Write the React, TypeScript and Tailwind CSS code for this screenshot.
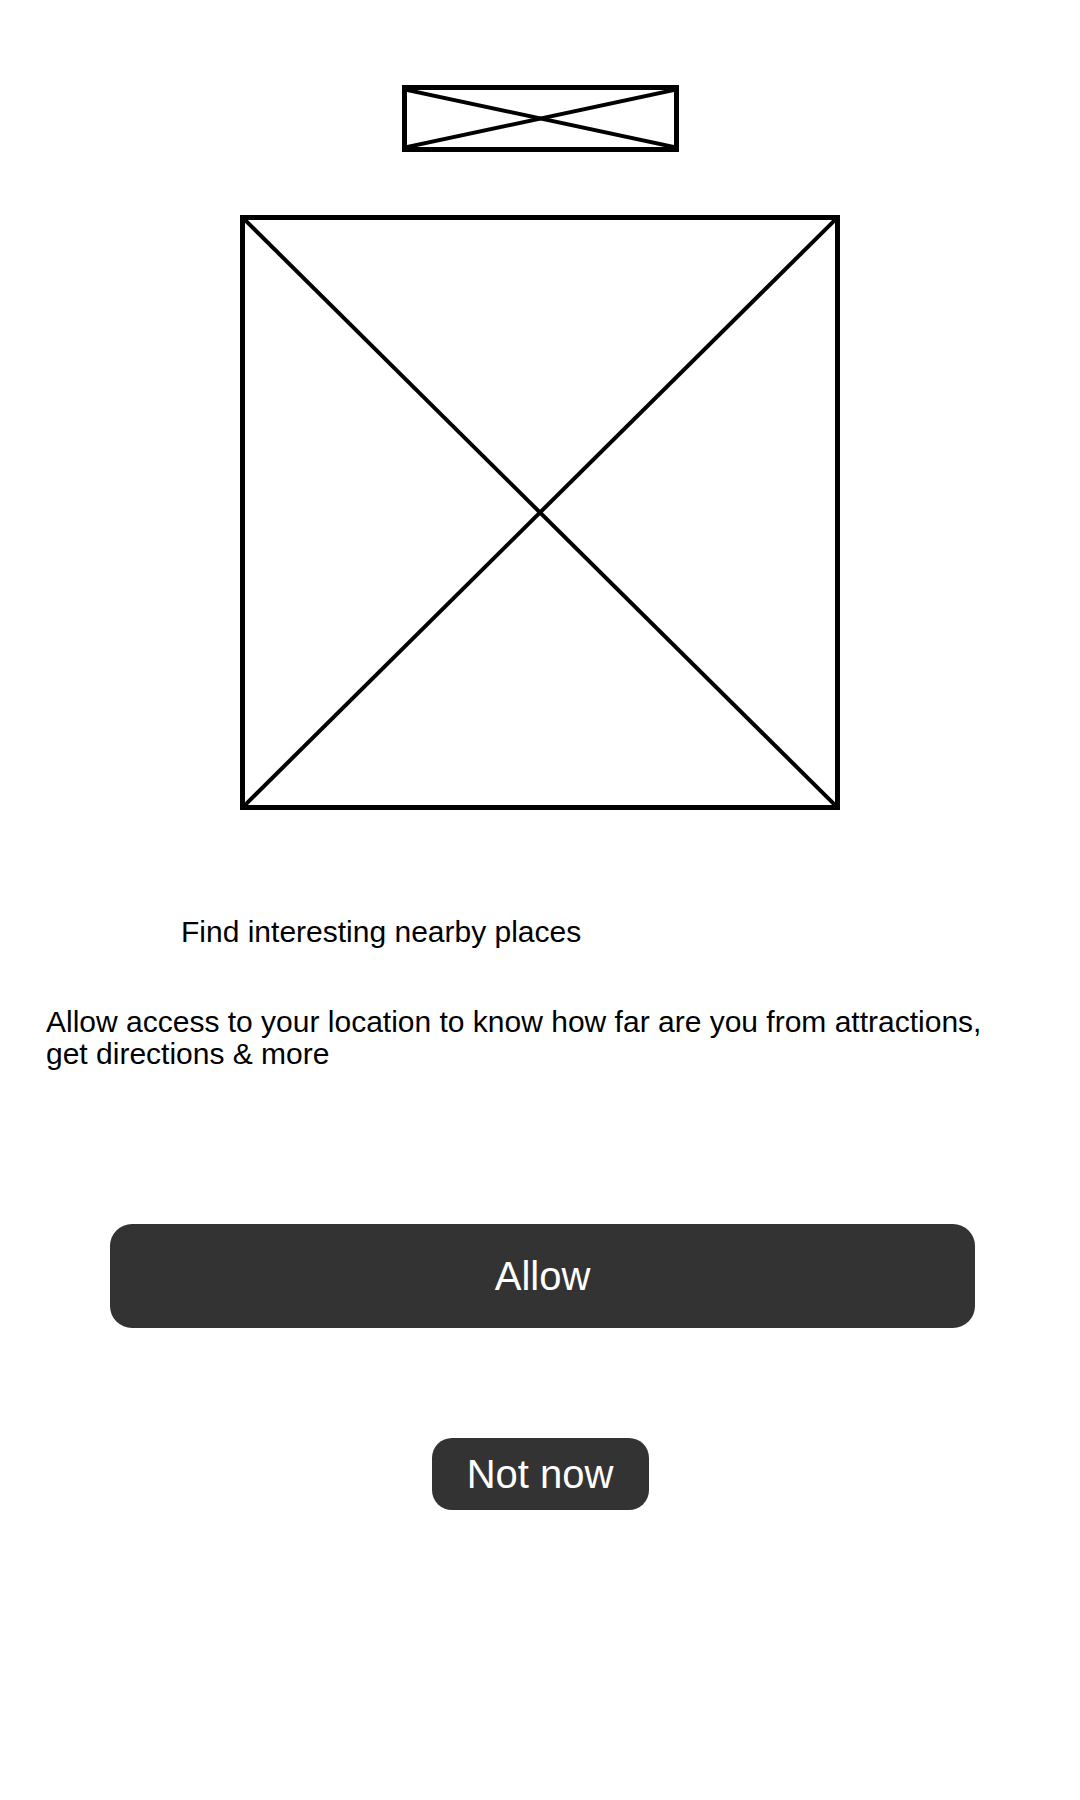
import React from "react";

function Placeholder({ className }: { className: string }) {
  return (
    <div className={`relative border-[5px] border-black bg-white ${className}`}>
      <svg className="absolute inset-0 h-full w-full" viewBox="0 0 100 100" preserveAspectRatio="none">
        <line x1="0" y1="0" x2="100" y2="100" stroke="black" strokeWidth="4" vectorEffect="non-scaling-stroke" />
        <line x1="100" y1="0" x2="0" y2="100" stroke="black" strokeWidth="4" vectorEffect="non-scaling-stroke" />
      </svg>
    </div>
  );
}

export default function App() {
  return (
    <div
      className="flex min-h-[1800px] w-[1080px] flex-col bg-white text-black"
      style={{ fontFamily: '"Liberation Sans", Arial, sans-serif' }}
    >
      <div className="flex flex-col items-center pt-[85px]">
        <Placeholder className="h-[67px] w-[277px]" />
        <Placeholder className="mt-[63px] h-[595px] w-[600px]" />
      </div>
      <p className="mt-[106px] pl-[181px] text-[30px] leading-[32px]">Find interesting nearby places</p>
      <p className="mt-[58px] pl-[46px] pr-[40px] text-[30px] leading-[32px]">
        Allow access to your location to know how far are you from attractions,
        <br />
        get directions &amp; more
      </p>
      <div className="mt-[154px] flex justify-center">
        <button className="ml-[5px] flex h-[104px] w-[865px] items-center justify-center rounded-[22px] bg-[#333333] text-[40px] text-white">
          Allow
        </button>
      </div>
      <div className="mt-[110px] flex justify-center">
        <button className="flex h-[72px] w-[217px] items-center justify-center rounded-[20px] bg-[#333333] text-[40px] text-white">
          Not now
        </button>
      </div>
    </div>
  );
}
